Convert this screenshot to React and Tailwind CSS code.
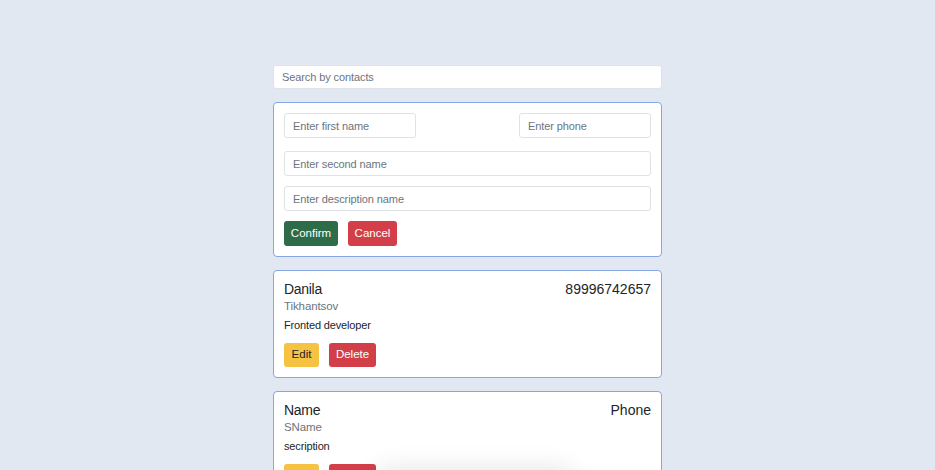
import React, { useState } from "react";

const contacts = [
  { id: 1, name: "Danila", surname: "Tikhantsov", phone: "89996742657", description: "Fronted developer" },
  { id: 2, name: "Name", surname: "SName", phone: "Phone", description: "secription" },
];

function Field({ placeholder, className = "" }) {
  return (
    <input
      placeholder={placeholder}
      className={`h-[25px] rounded-[3px] border border-[#dfe2e6] bg-white px-[8px] text-[11px] tracking-[-0.1px] text-[#212529] placeholder:text-[#6c757d] outline-none ${className}`}
    />
  );
}

function ContactCard({ contact }) {
  return (
    <div className="rounded-[4px] border border-[#86a6e6] bg-white p-[10px]">
      <div className="flex justify-between text-[14px] leading-[17px] text-[#212529]">
        <span className="tracking-[-0.3px]">{contact.name}</span>
        <span>{contact.phone}</span>
      </div>
      <div className="mt-[1px] text-[11.5px] leading-[14px] font-medium tracking-[-0.1px] text-[#6c757d]">{contact.surname}</div>
      <div className="mt-[5px] text-[11px] leading-[14px] tracking-[-0.15px] text-[#212529]">{contact.description}</div>
      <div className="mt-[11px] flex gap-[10px]">
        <button className="h-[24px] w-[35px] rounded-[3px] bg-[#f5c242] text-[11.5px] text-[#212529]">Edit</button>
        <button className="h-[24px] w-[47px] rounded-[3px] bg-[#d23f49] text-[11.5px] text-white">Delete</button>
      </div>
    </div>
  );
}

export default function App() {
  const [search, setSearch] = useState("");

  return (
    <div className="min-h-screen bg-[#e2e8f2] font-['Liberation_Sans',Arial,sans-serif] overflow-hidden">
      <div className="mx-auto flex w-[389px] flex-col gap-[13px] pt-[65px]">
        <input
          value={search}
          onChange={(e) => setSearch(e.target.value)}
          placeholder="Search by contacts"
          className="h-[24px] rounded-[3px] border border-[#dfe2e6] bg-white px-[8px] text-[11px] tracking-[-0.1px] placeholder:text-[#6c757d] outline-none"
        />

        {/* add contact form */}
        <div className="rounded-[4px] border border-[#86a6e6] bg-white p-[10px]">
          <div className="flex justify-between">
            <Field placeholder="Enter first name" className="w-[132px]" />
            <Field placeholder="Enter phone" className="w-[132px]" />
          </div>
          <Field placeholder="Enter second name" className="mt-[13px] w-full" />
          <Field placeholder="Enter description name" className="mt-[10px] w-full" />
          <div className="mt-[10px] flex gap-[10px]">
            <button className="h-[25px] w-[54px] rounded-[3px] bg-[#2e6b48] text-[11.5px] text-white">Confirm</button>
            <button className="h-[25px] w-[49px] rounded-[3px] bg-[#d23f49] text-[11.5px] text-white">Cancel</button>
          </div>
        </div>

        {contacts.map((c) => (
          <ContactCard key={c.id} contact={c} />
        ))}
      </div>

      {/* toast peeking from below */}
      <div className="fixed left-[385px] top-[480px] h-[40px] w-[180px] rounded-lg bg-white shadow-[0_0_26px_12px_rgba(0,0,0,0.10)]" />
    </div>
  );
}
